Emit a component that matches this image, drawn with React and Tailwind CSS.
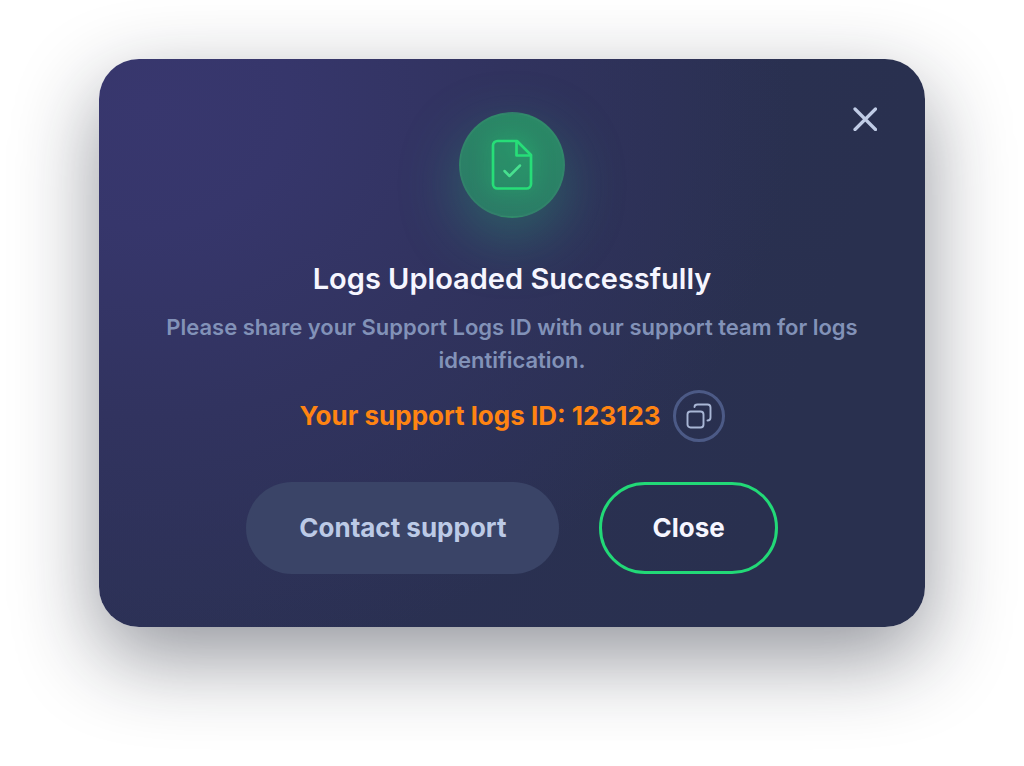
import { useState } from "react";

const SUPPORT_LOGS_ID = "123123";

function CloseIcon() {
  return (
    <svg viewBox="0 0 24 24" className="w-6 h-6" fill="none" stroke="currentColor" strokeWidth="3.2" strokeLinecap="round" aria-hidden="true">
      <path d="M2 2l20.500 20.500M22.500 2L2 22.500" />
    </svg>
  );
}

function CopyIcon() {
  return (
    <svg viewBox="0 0 26 26" className="w-[26px] h-[26px]" fill="none" stroke="currentColor" strokeWidth="1.9" strokeLinecap="round" aria-hidden="true">
      <rect x="1.500" y="8.500" width="16" height="16" rx="3" />
      <path d="M8.500 4c0-1.700 1.100-2.500 3-2.500h10c1.800 0 3 1.200 3 3v10c0 1.900-1.200 3-3 3" />
    </svg>
  );
}

function FileCheckIcon() {
  return (
    <svg viewBox="0 0 42 52" className="w-[42px] h-[52px] drop-shadow-[0_0_10px_#22d977]" fill="none" strokeLinecap="round" strokeLinejoin="round" aria-hidden="true">
      <path d="M6.500 2h19.500l14 14v29a4.500 4.500 0 0 1-4.500 4.500H6.500A4.500 4.500 0 0 1 2 45V6.500A4.500 4.500 0 0 1 6.500 2z" stroke="#27de78" strokeWidth="2.7" />
      <path d="M25.500 2.500V16.500h14" stroke="#27de78" strokeWidth="2.7" />
      <path d="M13.500 32l5 5L29 26.500" stroke="#48e08f" strokeWidth="2.500" />
    </svg>
  );
}

export default function App() {
  const [open, setOpen] = useState(true);

  const copyId = () => {
    navigator.clipboard?.writeText(SUPPORT_LOGS_ID);
  };

  if (!open) return null;

  return (
    <main className="min-h-screen flex justify-center items-start bg-white px-6 pt-[59px] pb-20 font-['Inter',sans-serif]">
      <section
        role="dialog"
        aria-labelledby="dialog-title"
        className="relative w-full max-w-[826px] flex flex-col items-center rounded-[40px] px-10 py-[53px] text-center bg-[radial-gradient(ellipse_78%_100%_at_6%_8%,#38376e_0%,#36366b_22%,#31335f_55%,#2c315500_100%),linear-gradient(110deg,#2c3156,#29304f_80%)] shadow-[0_30px_84px_rgba(20,24,40,0.46)]"
      >
        <button
          type="button"
          aria-label="Dismiss"
          onClick={() => setOpen(false)}
          className="absolute top-12 right-12 p-0 text-[#c0cce6] cursor-pointer"
        >
          <CloseIcon />
        </button>

        {/* Status badge */}
        <div className="flex items-center justify-center w-[106px] h-[106px] rounded-full border-2 border-[#ffffff08] bg-[linear-gradient(200deg,#2a8a66,#2c7a67)] shadow-[0_20px_60px_rgba(38,190,120,0.35)]">
          <FileCheckIcon />
        </div>

        <h1 id="dialog-title" className="mt-[43px] text-[29px] leading-9 font-semibold text-[#f6f6ff]">
          Logs Uploaded Successfully
        </h1>
        <p className="mt-[14px] text-[22px] leading-[33px] font-semibold text-[#8292b8]">
          Please share your Support Logs ID with our support team for logs identification.
        </p>

        <div className="mt-[13px] flex items-center gap-3">
          <p className="text-[26px] leading-8 font-bold text-[#ff8412]">
            Your support logs ID: {SUPPORT_LOGS_ID}
          </p>
          <button
            type="button"
            aria-label="Copy logs ID"
            onClick={copyId}
            className="flex items-center justify-center w-[52px] h-[52px] rounded-full border-3 border-[#4c5a86] text-[#a9b7d6] cursor-pointer"
          >
            <CopyIcon />
          </button>
        </div>

        {/* Actions */}
        <div className="mt-10 flex flex-wrap justify-center gap-10 text-[26px] leading-8 font-bold">
          <button type="button" className="h-[92px] px-[53px] rounded-full bg-[#3a4467] text-[#bccae6] cursor-pointer">
            Contact support
          </button>
          <button
            type="button"
            onClick={() => setOpen(false)}
            className="h-[92px] px-[50px] rounded-full border-3 border-[#22d977] text-[#f6f6ff] cursor-pointer"
          >
            Close
          </button>
        </div>
      </section>
    </main>
  );
}
